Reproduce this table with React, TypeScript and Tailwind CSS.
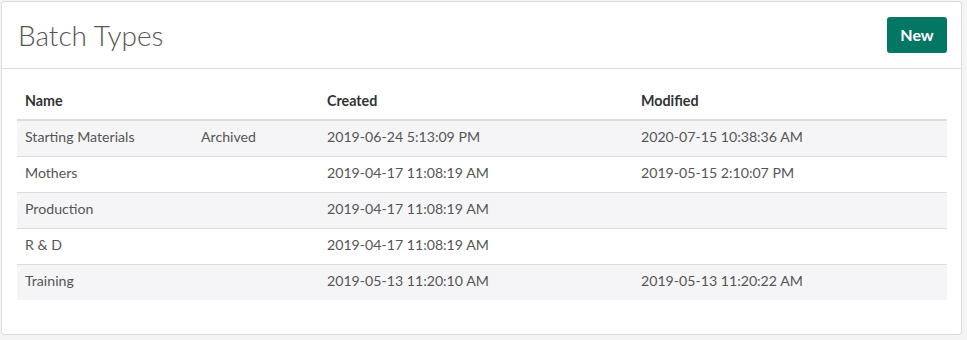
import React from "react";

const rows = [
  { name: "Starting Materials", status: "Archived", created: "2019-06-24 5:13:09 PM", modified: "2020-07-15 10:38:36 AM" },
  { name: "Mothers", status: "", created: "2019-04-17 11:08:19 AM", modified: "2019-05-15 2:10:07 PM" },
  { name: "Production", status: "", created: "2019-04-17 11:08:19 AM", modified: "" },
  { name: "R & D", status: "", created: "2019-04-17 11:08:19 AM", modified: "" },
  { name: "Training", status: "", created: "2019-05-13 11:20:10 AM", modified: "2019-05-13 11:20:22 AM" },
];

export default function App() {
  return (
    <div className="min-h-[340px] w-[967px] bg-[#f4f4f4] pt-px pl-px" style={{ fontFamily: "Lato, 'Open Sans', sans-serif" }}>
      <div className="w-[961px] h-[334px] bg-white border border-[#dcdcdc] rounded-[3px]">
        <div className="h-[67px] flex items-center justify-between pl-[16px] pr-[14px] border-b border-[#dcdcdc]">
          <h1 className="text-[28px] font-light text-[#555] leading-none">Batch Types</h1>
          <button className="w-[60px] h-[36px] rounded-[3px] bg-[#037764] text-white font-bold text-[16px]">New</button>
        </div>
        <div className="pl-[15px] pr-[14px] pt-[15px]">
          <table className="w-[930px] border-collapse text-[14.15px] text-[#555]">
            <thead>
              <tr className="h-[36px] border-b-2 border-[#dcdcdc] text-[14.3px]">
                <th className="w-[176px] text-left pl-[8px] pb-[2px] font-bold text-[#333]">Name</th>
                <th className="w-[126px]"></th>
                <th className="w-[314px] text-left pl-[8px] pb-[2px] font-bold text-[#333]">Created</th>
                <th className="text-left pl-[8px] pb-[2px] font-bold text-[#333]">Modified</th>
              </tr>
            </thead>
            <tbody>
              {rows.map((r, i) => (
                <tr key={i} className={`h-[36px] ${i < rows.length - 1 ? "border-b border-[#dcdcdc]" : ""} ${i % 2 === 0 ? "bg-[#f5f5f7]" : "bg-white"}`}>
                  <td className="pl-[8px] pb-[3px]">{r.name}</td>
                  <td className="pl-[8px] pb-[3px]">{r.status}</td>
                  <td className="pl-[8px] pb-[3px]">{r.created}</td>
                  <td className="pl-[8px] pb-[3px]">{r.modified}</td>
                </tr>
              ))}
            </tbody>
          </table>
        </div>
      </div>
    </div>
  );
}
